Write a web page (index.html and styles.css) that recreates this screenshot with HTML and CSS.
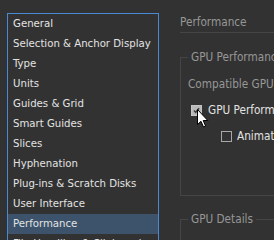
FILE: index.html
```html
<!DOCTYPE html>
<html lang="en">
<head>
  <meta charset="UTF-8">
  <title>Preferences</title>
  <link rel="stylesheet" href="styles.css">
</head>
<body>
  <div class="prefs">
    <ul class="cats">
      <li>General</li>
      <li>Selection &amp; Anchor Display</li>
      <li>Type</li>
      <li>Units</li>
      <li>Guides &amp; Grid</li>
      <li>Smart Guides</li>
      <li>Slices</li>
      <li>Hyphenation</li>
      <li>Plug-ins &amp; Scratch Disks</li>
      <li>User Interface</li>
      <li class="active">Performance</li>
      <li>File Handling &amp; Clipboard</li>
      <li>Appearance of Black</li>
    </ul>

    <div class="pane">
      <div class="pane-title">Performance</div>

      <fieldset class="group gpu">
        <legend>GPU Performance</legend>
        <div class="muted">Compatible GPU Detected</div>
        <label class="check on">
          <span class="box">
            <svg viewBox="0 0 11 11"><path d="M2.5 5.5 L4.5 7.8 L8.6 2.8" /></svg>
          </span>
          GPU Performance
        </label>
        <label class="check sub">
          <span class="box"></span>
          Animated Zoom
        </label>
      </fieldset>

      <fieldset class="group">
        <legend>GPU Details</legend>
      </fieldset>
    </div>
  </div>

  <!-- mouse pointer over the checkbox -->
  <svg class="cursor" viewBox="0 0 12 19" width="12" height="19">
    <path d="M0.5 0.5 L0.5 15.5 L4 12.3 L6.5 18 L8.6 17.1 L6.2 11.5 L10.8 11.5 Z" fill="#fff" stroke="#000" stroke-width="1"/>
  </svg>
</body>
</html>
```

FILE: styles.css
```css
:root {
  --fundo: #323232;
  --texto: #e3e3e3;
  --texto-apagado: #979797;
  --linha: #454545;
  --azul: #4a8ad4;
  --selecao: #3c536b;
}

html, body {
  margin: 0;
  height: 100%;
}

body {
  background-color: var(--fundo);
  color: var(--texto);
  font-family: Tahoma, "DejaVu Sans Condensed", "Liberation Sans", sans-serif;
  font-size: 11.3px;
  overflow: hidden;
  width: 274px;
  height: 240px;
  position: relative;
}

.prefs {
  display: flex;
  padding: 13px 0 0 7px;
  width: 600px;
}

/* Category list */
.cats {
  list-style: none;
  margin: 0;
  padding: 0;
  width: 150px;
  height: 400px;
  border: 1px solid var(--azul);
  flex-shrink: 0;
}

.cats li {
  height: 20px;
  line-height: 20px;
  padding-left: 5px;
  white-space: nowrap;
  overflow: hidden;
}

.cats li.active {
  background-color: var(--selecao);
}

/* Right pane */
.pane {
  margin-left: 21px;
  padding-top: 2px;
  flex: 1;
  white-space: nowrap;
  font-size: 11.7px;
}

.pane-title {
  color: var(--texto-apagado);
  line-height: 14px;
  padding-bottom: 3px;
  border-bottom: 1px solid var(--linha);
}

.group {
  margin: 17px 0 0 0;
  padding: 0 0 0 7px;
  border: 1px solid var(--linha);
  min-width: 0;
}

.group legend {
  color: var(--texto-apagado);
  line-height: 14px;
  padding: 0 3px;
}

.gpu {
  padding-bottom: 52px;
}

.gpu + .group {
  margin-top: 16px;
  height: 60px;
}

.muted {
  color: var(--texto-apagado);
  line-height: 14px;
  margin-top: 13px;
}

.check {
  display: flex;
  align-items: center;
  height: 14px;
  margin-top: 12px;
  margin-left: 3px;
  gap: 6px;
}

.check.sub {
  margin-left: 33px;
  gap: 5px;
}

.box {
  width: 9px;
  height: 9px;
  border: 1px solid #a8a8a8;
  flex-shrink: 0;
  display: flex;
}

.check.on .box {
  background-color: #b8b8b8;
  border-color: #c4c4c4;
}

.box svg {
  width: 9px;
  height: 9px;
  fill: none;
  stroke: #3a3a3a;
  stroke-width: 1.8;
}

.cursor {
  position: absolute;
  left: 197px;
  top: 109px;
}
```
